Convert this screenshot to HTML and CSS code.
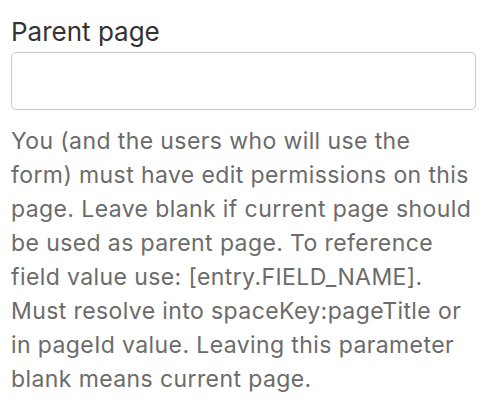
FILE: index.html
```html
<!DOCTYPE html>
<html lang="en">
<head>
  <meta charset="UTF-8" />
  <title>Parent page</title>
  <link rel="stylesheet" href="styles.css">
</head>
<body>
  <div class="field">
    <label class="field-label" for="parent-page">Parent page</label>
    <input class="field-input" id="parent-page" type="text" />
    <p class="field-help">You (and the users who will use the form) must have edit permissions on this page. Leave blank if current page should be used as parent page. To reference field value use: [entry.FIELD_NAME]. Must resolve into spaceKey:pageTitle or in pageId value. Leaving this parameter blank means current page.</p>
  </div>
</body>
</html>
```

FILE: styles.css
```css
body {
  margin: 0;
  background: #fff;
  font-family: Inter, "Noto Sans", sans-serif;
}

.field {
  width: 465px;
  padding: 14px 0 0 11px;
}

.field-label {
  display: block;
  font-size: 26px;
  line-height: 36px;
  color: #333;
}

.field-input {
  display: block;
  box-sizing: border-box;
  width: 465px;
  height: 58px;
  margin-top: 2px;
  border: 1.5px solid #c3c8d2;
  border-radius: 5px;
  background: #fff;
}

.field-help {
  margin: 14px 0 0;
  font-size: 23px;
  line-height: 34px;
  letter-spacing: 0.4px;
  color: #6b6b6b;
}
```
